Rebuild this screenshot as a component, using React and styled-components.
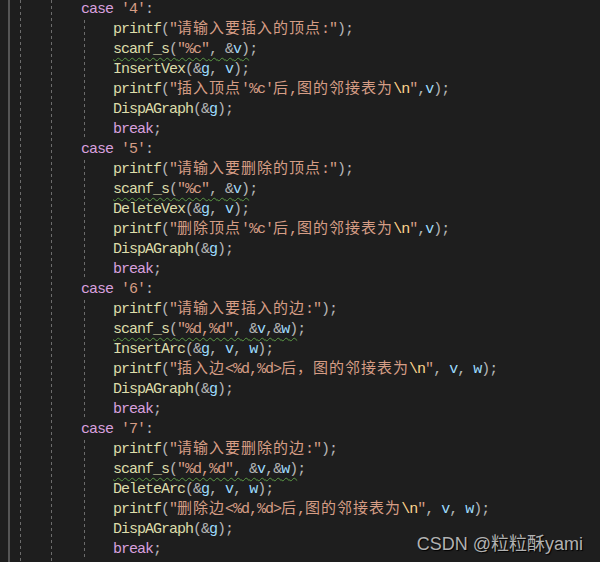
import React from 'react';
import styled, { createGlobalStyle } from 'styled-components';

const GlobalStyle = createGlobalStyle`
  html, body {
    margin: 0;
    padding: 0;
    background: #1e1e1e;
  }
`;

const colors = {
  kw: '#d8a0df',
  fn: '#dcdcaa',
  str: '#d69d85',
  esc: '#ffd68f',
  var: '#9cdcfe',
  p: '#b4b4b4',
};

const dash = (x) =>
  `repeating-linear-gradient(to bottom, #6c6c6c 0 3px, transparent 3px 6px) ${x}px 0 / 1px 100% no-repeat`;

/* editor canvas with the indent guides of the outer blocks */
const Editor = styled.div`
  position: relative;
  width: 600px;
  height: 562px;
  overflow: hidden;
  background: linear-gradient(#555, #555) 8px 0 / 2px 100% no-repeat,
    ${dash(20)}, ${dash(51)}, #1e1e1e;
  font-family: 'Liberation Mono', 'DejaVu Sans Mono', monospace;
  font-size: 15px;
  letter-spacing: -1px;
`;

const CaseBlock = styled.div``;

/* statements under a case: one more guide */
const Body = styled.div`
  background: ${dash(84)};
`;

const Line = styled.div`
  height: 20px;
  line-height: 20px;
  white-space: pre;
  padding-left: ${(p) => p.$indent}px;
  color: ${colors.p};
`;

const Tok = styled.span`
  color: ${(p) => colors[p.$k]};
`;

const Cn = styled.span`
  font-family: 'Noto Sans CJK SC', sans-serif;
  font-size: 15px;
  line-height: 14px;
  letter-spacing: 1px;
`;

const Wavy = styled.span`
  text-decoration: underline wavy #5b9a45;
  text-decoration-thickness: 1px;
  text-underline-offset: 4px;
`;

const Watermark = styled.div`
  position: absolute;
  right: 17px;
  top: 529px;
  font-family: 'Liberation Sans', 'Noto Sans CJK SC', sans-serif;
  font-size: 18px;
  color: #b2b2b2;
  text-shadow: 1px 1px 1px #000;
  letter-spacing: 0;
`;

const cases = [
  {
    n: '4',
    lines: [
      'printf("请输入要插入的顶点:");',
      '~scanf_s("%c", &v);',
      'InsertVex(&g, v);',
      'printf("插入顶点\'%c\'后,图的邻接表为\\n",v);',
      'DispAGraph(&g);',
      'break;',
    ],
  },
  {
    n: '5',
    lines: [
      'printf("请输入要删除的顶点:");',
      '~scanf_s("%c", &v);',
      'DeleteVex(&g, v);',
      'printf("删除顶点\'%c\'后,图的邻接表为\\n",v);',
      'DispAGraph(&g);',
      'break;',
    ],
  },
  {
    n: '6',
    lines: [
      'printf("请输入要插入的边:");',
      '~scanf_s("%d,%d", &v,&w);',
      'InsertArc(&g, v, w);',
      'printf("插入边<%d,%d>后，图的邻接表为\\n", v, w);',
      'DispAGraph(&g);',
      'break;',
    ],
  },
  {
    n: '7',
    lines: [
      'printf("请输入要删除的边:");',
      '~scanf_s("%d,%d", &v,&w);',
      'DeleteArc(&g, v, w);',
      'printf("删除边<%d,%d>后,图的邻接表为\\n", v, w);',
      'DispAGraph(&g);',
      'break;',
    ],
  },
];

const keywords = ['case', 'break'];

const StrLit = ({ text }) => {
  const parts = text.split(/(\\n|[\u3000-\u9fff\uff00-\uffef]+)/).filter(Boolean);
  return (
    <Tok $k="str">
      {parts.map((part, i) => {
        if (part === '\\n') return <Tok key={i} $k="esc">{part}</Tok>;
        if (/[\u3000-\u9fff\uff00-\uffef]/.test(part)) return <Cn key={i}>{part}</Cn>;
        return part;
      })}
    </Tok>
  );
};

const Code = ({ src }) => {
  const re = /("(?:[^"\\]|\\.)*"|'[^']*'|[A-Za-z_]\w*|\s+|.)/g;
  const toks = src.match(re) || [];
  return toks.map((t, i) => {
    if (t[0] === '"') return <StrLit key={i} text={t} />;
    if (t[0] === "'") return <Tok key={i} $k="str">{t}</Tok>;
    if (/^[A-Za-z_]/.test(t)) {
      let k = 'var';
      if (keywords.includes(t)) k = 'kw';
      else if (toks[i + 1] === '(') k = 'fn';
      return <Tok key={i} $k={k}>{t}</Tok>;
    }
    return <Tok key={i} $k="p">{t}</Tok>;
  });
};

const Statement = ({ src }) => {
  if (src[0] === '~') {
    const body = src.slice(1, -1);
    return (
      <Line $indent={113}>
        <Wavy>
          <Code src={body} />
        </Wavy>
        <Code src=";" />
      </Line>
    );
  }
  return (
    <Line $indent={113}>
      <Code src={src} />
    </Line>
  );
};

export default function App() {
  return (
    <>
      <GlobalStyle />
      <Editor>
        {cases.map((c) => (
          <CaseBlock key={c.n}>
            <Line $indent={81}>
              <Code src={`case '${c.n}':`} />
            </Line>
            <Body>
              {c.lines.map((l, i) => (
                <Statement key={i} src={l} />
              ))}
            </Body>
          </CaseBlock>
        ))}
        <Watermark>CSDN @粒粒酥yami</Watermark>
      </Editor>
    </>
  );
}
